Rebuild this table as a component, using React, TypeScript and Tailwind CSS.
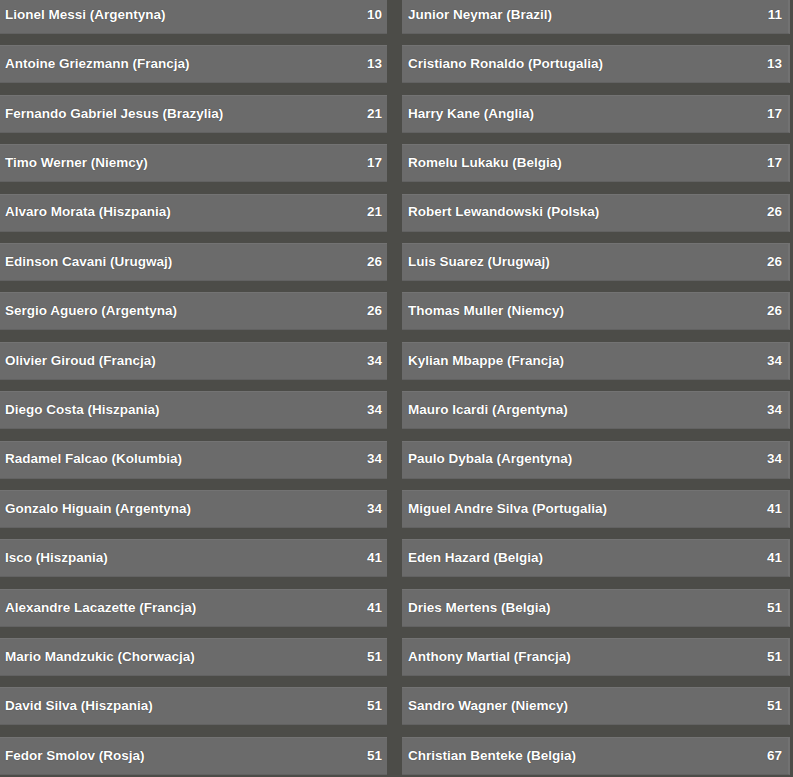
import React from "react";

const left: [string, number][] = [
  ["Lionel Messi (Argentyna)", 10],
  ["Antoine Griezmann (Francja)", 13],
  ["Fernando Gabriel Jesus (Brazylia)", 21],
  ["Timo Werner (Niemcy)", 17],
  ["Alvaro Morata (Hiszpania)", 21],
  ["Edinson Cavani (Urugwaj)", 26],
  ["Sergio Aguero (Argentyna)", 26],
  ["Olivier Giroud (Francja)", 34],
  ["Diego Costa (Hiszpania)", 34],
  ["Radamel Falcao (Kolumbia)", 34],
  ["Gonzalo Higuain (Argentyna)", 34],
  ["Isco (Hiszpania)", 41],
  ["Alexandre Lacazette (Francja)", 41],
  ["Mario Mandzukic (Chorwacja)", 51],
  ["David Silva (Hiszpania)", 51],
  ["Fedor Smolov (Rosja)", 51],
];

const right: [string, number][] = [
  ["Junior Neymar (Brazil)", 11],
  ["Cristiano Ronaldo (Portugalia)", 13],
  ["Harry Kane (Anglia)", 17],
  ["Romelu Lukaku (Belgia)", 17],
  ["Robert Lewandowski (Polska)", 26],
  ["Luis Suarez (Urugwaj)", 26],
  ["Thomas Muller (Niemcy)", 26],
  ["Kylian Mbappe (Francja)", 34],
  ["Mauro Icardi (Argentyna)", 34],
  ["Paulo Dybala (Argentyna)", 34],
  ["Miguel Andre Silva (Portugalia)", 41],
  ["Eden Hazard (Belgia)", 41],
  ["Dries Mertens (Belgia)", 51],
  ["Anthony Martial (Francja)", 51],
  ["Sandro Wagner (Niemcy)", 51],
  ["Christian Benteke (Belgia)", 67],
];

function Row({ name, odds, side }: { name: string; odds: number; side: "l" | "r" }) {
  return (
    <div
      className={
        "h-[38px] bg-[#6b6b6b] border-t border-[#737373] border-b border-b-[#626262] flex items-center justify-between text-white font-bold text-[13.5px] [text-shadow:0_0_1px_rgba(0,0,0,0.6)] " +
        (side === "l" ? "pl-[5px] pr-[5px]" : "pl-[6px] pr-[6px] border-r-[2px] border-r-[#727272]")
      }
    >
      <span>{name}</span>
      <span>{odds}</span>
    </div>
  );
}

export default function App() {
  return (
    <div
      className="w-[793px] h-[777px] overflow-hidden bg-[#4c4c48]"
      style={{ fontFamily: '"Liberation Sans", Arial, sans-serif' }}
    >
      <div className="grid grid-cols-[387px_388px] gap-x-[15px] gap-y-[11.4px] -mt-[4px]">
        {left.map((l, i) => (
          <React.Fragment key={i}>
            <Row name={l[0]} odds={l[1]} side="l" />
            <Row name={right[i][0]} odds={right[i][1]} side="r" />
          </React.Fragment>
        ))}
      </div>
    </div>
  );
}
